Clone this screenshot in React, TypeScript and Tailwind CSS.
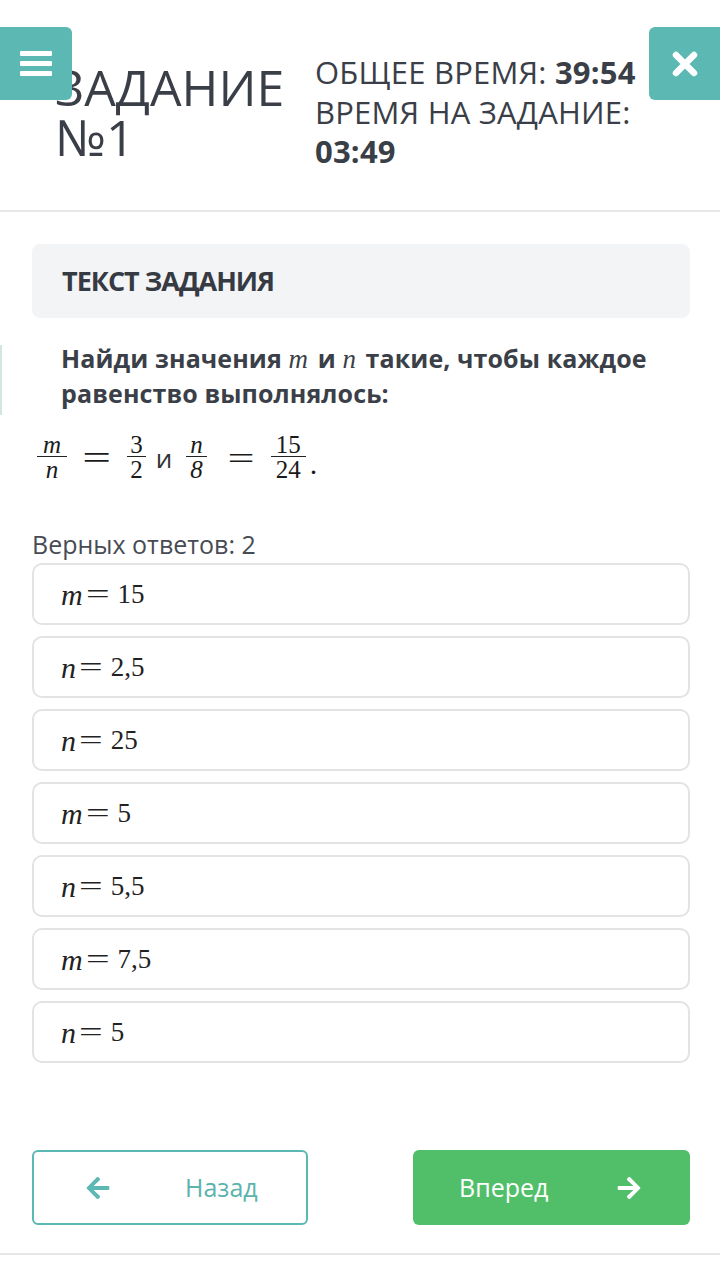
import { FaArrowLeft, FaArrowRight } from 'react-icons/fa';

const serif = { fontFamily: '"Liberation Serif", "DejaVu Serif", serif' };

const Frac = ({ top, bottom, italic, pad }: { top: string; bottom: string; italic?: boolean; pad: string }) => (
  <span className="inline-flex flex-col items-center">
    <span className={`text-[25px] leading-[22px] ${pad} ${italic ? 'italic' : ''}`}>{top}</span>
    <span className="w-full border-t-[1.5px] border-[#222]" />
    <span className={`text-[25px] leading-[25px] ${pad} ${italic ? 'italic' : ''}`}>{bottom}</span>
  </span>
);

const options = [
  { v: 'm', n: '15' },
  { v: 'n', n: '2,5' },
  { v: 'n', n: '25' },
  { v: 'm', n: '5' },
  { v: 'n', n: '5,5' },
  { v: 'm', n: '7,5' },
  { v: 'n', n: '5' },
];

const App = () => {
  return (
    <div className="min-h-[1275px] bg-white text-[#3b3f48]" style={{ fontFamily: '"Open Sans", "Noto Sans", sans-serif' }}>
      {/* header */}
      <div className="relative flex items-start h-[212px] pt-[53px] pl-[55px] border-b-2 border-[#e7e7e7]">
        <div className="w-[258px] mt-[9px] text-[50px] leading-[50px] text-[#3a3e47]">
          <div>ЗАДАНИЕ</div>
          <div>№1</div>
        </div>
        <div className="pl-[2px] text-[31px] leading-[39.5px] tracking-[0.2px] text-[#3a3e47]">
          <div>
            ОБЩЕЕ ВРЕМЯ: <span className="font-bold">39:54</span>
          </div>
          <div>ВРЕМЯ НА ЗАДАНИЕ:</div>
          <div className="font-bold">03:49</div>
        </div>

        <button className="absolute left-0 top-[27px] w-[72px] h-[73px] bg-[#5bb8b2] rounded-r-[6px] flex flex-col items-center justify-center gap-[5px]">
          <span className="block w-[32px] h-[5px] bg-white rounded-[1px]" />
          <span className="block w-[32px] h-[5px] bg-white rounded-[1px]" />
          <span className="block w-[32px] h-[5px] bg-white rounded-[1px]" />
        </button>
        <button className="absolute right-0 top-[27px] w-[71px] h-[73px] bg-[#5bb8b2] rounded-l-[6px] flex items-center justify-center">
          <svg width="26" height="26" viewBox="0 0 26 26">
            <path d="M4 4 L22 22 M22 4 L4 22" stroke="white" strokeWidth="6.5" strokeLinecap="round" />
          </svg>
        </button>
      </div>

      {/* task */}
      <div className="pl-[32px] pr-[30px]">
        <div className="mt-[32px] h-[74px] flex items-center px-[30px] bg-[#f3f4f6] rounded-[8px]">
          <span className="text-[27px] font-bold tracking-[-1px] text-[#363a43]">ТЕКСТ ЗАДАНИЯ</span>
        </div>
      </div>

      <div className="flex mt-[23px]">
        <div className="w-[3px] h-[70px] mt-[4px] bg-[#d3e6e4]" />
        <div className="pl-[59px] pr-[20px] text-[25px] leading-[35px] font-bold tracking-[0.1px] text-[#3b3f48]">
          Найди значения <span className="inline-block italic font-normal text-[27px] leading-[20px] pr-[3px]" style={serif}>m</span> и{' '}
          <span className="inline-block italic font-normal text-[27px] leading-[20px] pr-[3px]" style={serif}>n</span> такие, чтобы каждое равенство выполнялось:
        </div>
      </div>

      <div className="pl-[32px] pr-[30px]">
        <div className="mt-[15px] flex items-center h-[56px] pl-[5px] text-[#1a1a1a]" style={serif}>
          <Frac top="m" bottom="n" italic pad="px-[6px]" />
          <span className="inline-block scale-x-150 text-[34px] leading-none ml-[20px] mr-[21px]">=</span>
          <Frac top="3" bottom="2" pad="px-[3px]" />
          <span className="ml-[10px] mr-[14px] text-[26px] text-[#333]" style={{ fontFamily: '"Open Sans", sans-serif' }}>и</span>
          <Frac top="n" bottom="8" italic pad="px-[4px]" />
          <span className="inline-block scale-x-150 text-[32px] leading-none ml-[25px] mr-[21px]">=</span>
          <Frac top="15" bottom="24" pad="px-[5px]" />
          <span className="text-[30px] self-center mt-[10px] ml-[4px]">.</span>
        </div>

        <div className="mt-[43px] text-[25px] leading-[30px] text-[#474b54]">Верных ответов: 2</div>

        <div className="mt-[4px] flex flex-col gap-[11px]">
          {options.map((o, i) => (
            <div key={i} className="h-[62px] flex items-center px-[27px] border-2 border-[#e3e3e3] rounded-[10px] text-[27px] text-[#222]" style={serif}>
              <span className="italic text-[30px]">{o.v}</span>
              <span className="inline-block scale-x-150 text-[28px] ml-[7px] mr-[12px]">=</span>
              <span>{o.n}</span>
            </div>
          ))}
        </div>

        <div className="mt-[87px] flex justify-between">
          <button className="w-[276px] h-[75px] flex items-center pl-[51px] border-2 border-[#5bb8b2] rounded-[6px] text-[#5cb3ae] text-[25px]">
            <FaArrowLeft size={26} className="text-[#5bb8b2]" />
            <span className="ml-[74px]">Назад</span>
          </button>
          <button className="w-[277px] h-[75px] flex items-center justify-between pl-[46px] pr-[48px] bg-[#51bf6a] rounded-[6px] text-white text-[25px]">
            <span>Вперед</span>
            <FaArrowRight size={26} />
          </button>
        </div>
      </div>

      <div className="mt-[28px] border-b-2 border-[#e7e7e7]" />
    </div>
  );
};

export default App;
